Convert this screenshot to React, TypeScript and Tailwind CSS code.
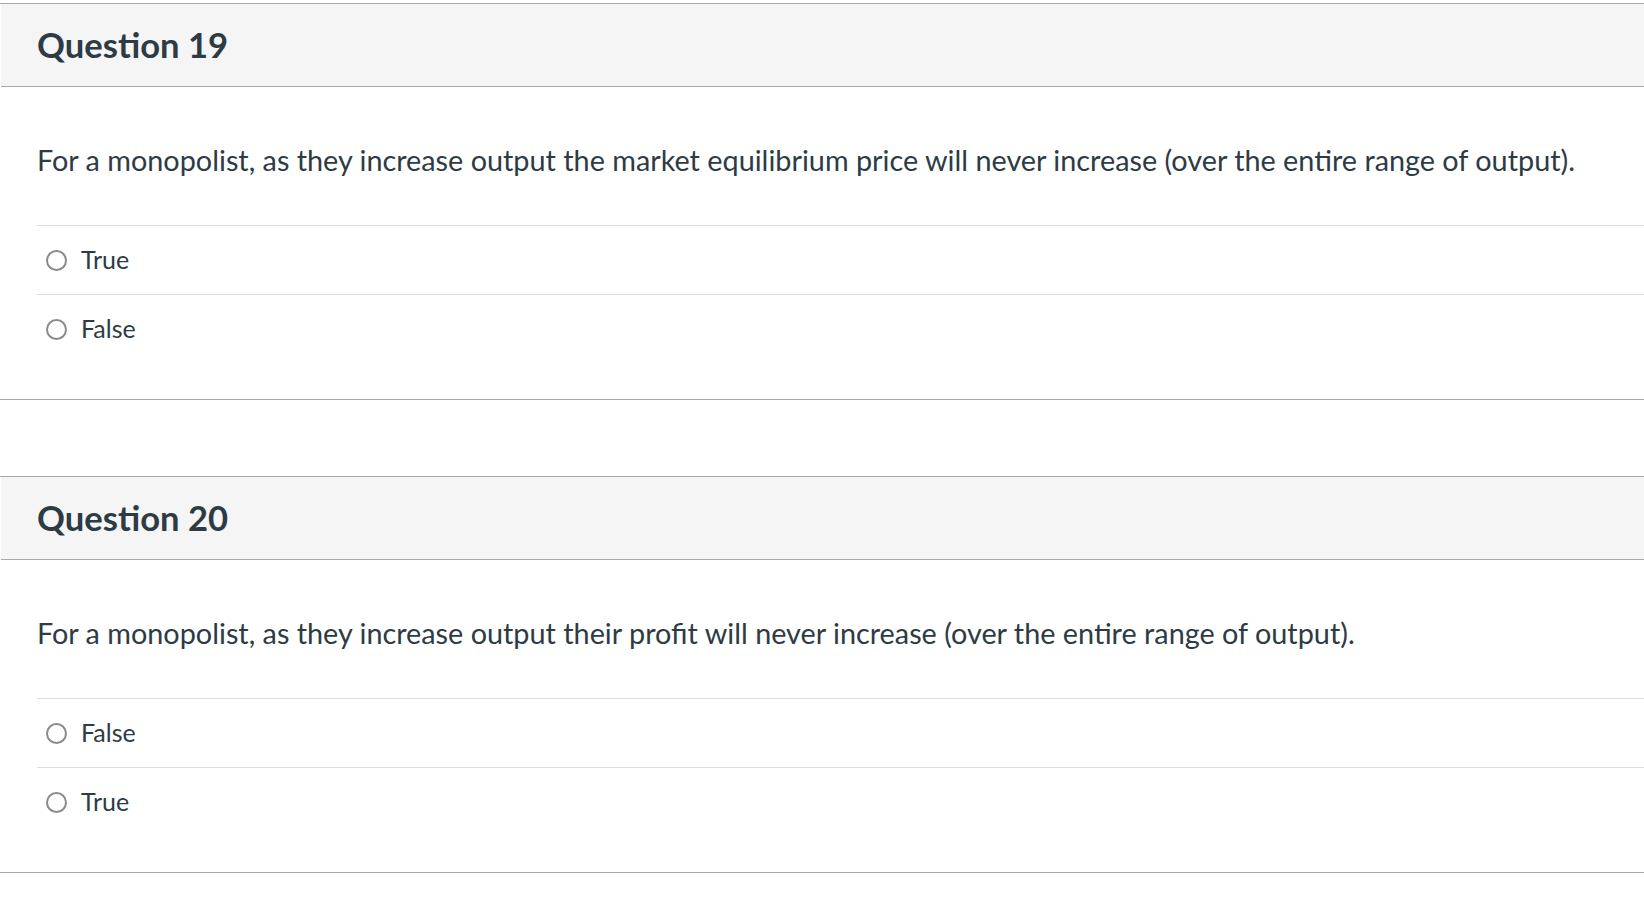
import React from 'react';

// ==================== Types ====================

interface QuestionProps {
  number: number;
  text: string;
  options: string[];
}

// ==================== Data ====================

const QUESTIONS: QuestionProps[] = [
  {
    number: 19,
    text: 'For a monopolist, as they increase output the market equilibrium price will never increase (over the entire range of output).',
    options: ['True', 'False'],
  },
  {
    number: 20,
    text: 'For a monopolist, as they increase output their profit will never increase (over the entire range of output).',
    options: ['False', 'True'],
  },
];

// ==================== Components ====================

const AnswerOption = ({ label }: { label: string }) => (
  <label className="flex h-[69px] items-center border-t border-[#dcdcdc] pl-[9px]">
    <span className="h-[21px] w-[21px] shrink-0 rounded-full border-2 border-[#8a8a8a] bg-white" />
    <span className="mb-[3px] ml-[14px] text-[25px] leading-[1.2] text-[#2d3b45]">{label}</span>
  </label>
);

const Question = ({ number, text, options }: QuestionProps) => (
  <section className="border-y border-[#a9a9a9]">
    <header className="ml-px flex h-[83px] items-center border-b border-[#a9a9a9] bg-[#f5f5f5] pl-[36px]">
      <h2 className="text-[34.6px] font-bold leading-[1.2] text-[#2d3b45]">Question {number}</h2>
    </header>
    <div className="pl-[37px] pb-[36px]">
      <div className="flex h-[138px] items-start pt-[56px]">
        <p className="text-[28.8px] leading-[1.2] text-[#2d3b45]">{text}</p>
      </div>
      <div>
        {options.map((option) => (
          <AnswerOption key={option} label={option} />
        ))}
      </div>
    </div>
  </section>
);

export default function App() {
  return (
    <div className="min-h-screen bg-white pt-[3px]" style={{ fontFamily: 'Lato, "Noto Sans", sans-serif' }}>
      <div className="flex flex-col gap-[76px]">
        {QUESTIONS.map((q) => (
          <Question key={q.number} {...q} />
        ))}
      </div>
    </div>
  );
}
